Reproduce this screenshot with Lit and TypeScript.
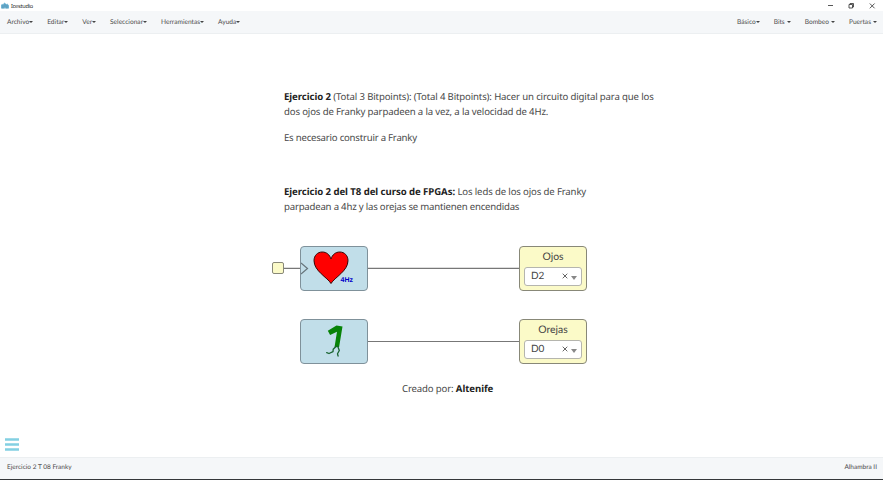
import { LitElement, html, css, svg } from "lit";
import { customElement, property } from "lit/decorators.js";

@customElement("menu-item")
class MenuItem extends LitElement {
  @property() label = "";
  @property({ type: Boolean }) spaced = false;
  static styles = css`
    :host { display: flex; align-items: center; font: 6.6px/10px Lato, sans-serif; color: #4c4c4c; white-space: nowrap; text-rendering: geometricPrecision; }
    .caret { border: 2px solid transparent; border-top-color: #444; border-bottom: 0; }
    .gap { margin-left: 2px; }
  `;
  render() {
    return html`<span>${this.label}</span><i class="caret ${this.spaced ? "gap" : ""}"></i>`;
  }
}

@customElement("output-block")
class OutputBlock extends LitElement {
  @property() name = "";
  @property() pin = "";
  static styles = css`
    :host { display: flex; flex-direction: column; box-sizing: border-box; width: 68px; height: 45px; padding: 2px 4px 0; background: #fbfac8; border: 1px solid #888878; border-radius: 4px; font-family: Lato, sans-serif; color: #444; text-rendering: geometricPrecision; }
    .name { font-size: 10.4px; line-height: 16px; text-align: center; height: 18px; }
    .select { display: flex; align-items: center; box-sizing: border-box; height: 19px; border: 1px solid #b5b5ae; border-radius: 3px; background: #fff; padding: 0 4px 0 6px; }
    .pin { flex: 1; font-size: 10px; line-height: 16px; margin-top: -1px; }
    .x { width: 6px; height: 6px; margin-right: 3px; margin-top: -1px; }
    .caret { border: 3px solid transparent; border-top: 4px solid #888; border-bottom: 0; margin-top: 2px; }
  `;
  render() {
    return html`<div class="name">${this.name}</div>
      <div class="select"><span class="pin">${this.pin}</span>
        <svg class="x" viewBox="0 0 6 6"><path d="M.7 .7 5.300 5.300M5.300 .7 .7 5.300" stroke="#666" stroke-width="1"/></svg>
        <i class="caret"></i></div>`;
  }
}

const logo = svg`<path d="M0 3 1.5 1.5 2 2.5 4 0 6 2 7 1.3 9 3.5V7H0Z" fill="#72b5d4"/><path d="M2.2 3V7M4.5 2V5.5M6.7 3V7" stroke="#397aa0" stroke-width=".7"/>`;

const heart = svg`<path d="M18 32.5C14.5 26.5 1 20 1 9.7C1 4.500 4.600 1 9.200 1C13.500 1 16.700 3.700 18 8C19.300 3.700 22.500 1 26.800 1C31.400 1 35 4.500 35 9.700C35 20 21.500 26.500 18 32.500Z" fill="#f00" stroke="#350808" stroke-width="1"/>`;

const walkingOne = svg`<path d="M2.300 5.800 11 .6 17 1.500 13.600 22 9 22.300 11.500 6.800 4.600 10Z" fill="#078307"/><path d="M10.500 21.500 7.700 24.300 7.500 26.700 3.500 28.500 1.200 27.600M12.300 21.500 13.800 25.500 12 28.800 12.600 31" fill="none" stroke="#18632f" stroke-width="1.300" stroke-linejoin="round" stroke-linecap="round"/>`;

@customElement("app-root")
class AppRoot extends LitElement {
  static styles = css`
    :host { display: flex; flex-direction: column; width: 883px; height: 480px; background: #fff; overflow: hidden; font-family: Lato, sans-serif; color: #444; text-rendering: geometricPrecision; }
    .title { display: flex; align-items: center; height: 11px; padding-left: 1px; font: 5.6px/10px "Noto Sans", sans-serif; letter-spacing: -.25px; color: #222; }
    .logo { width: 8px; height: 7px; margin-right: 2px; }
    .window { margin-left: auto; width: 56px; height: 10px; }
    .menu { display: flex; box-sizing: border-box; height: 23px; padding: 6px 6px 0 7px; background: #f5f7f9; border-bottom: 1px solid #eceff1; align-items: flex-start; justify-content: space-between; }
    .group { display: flex; gap: 14px; }
    .canvas { position: relative; flex: 1; }
    .wires, .block, .note, .port, .burger { position: absolute; }
    .wires { left: 0; top: 0; width: 883px; height: 423px; }
    .note { left: 284px; font: 9.6px/15px "Noto Sans", sans-serif; letter-spacing: -.145px; white-space: nowrap; color: #484848; }
    .note b { color: #1e1e22; letter-spacing: -.06px; }
    .n1 { top: 55px; }
    .n2 { top: 96px; letter-spacing: -.22px; }
    .n3 { top: 150px; }
    .tight { letter-spacing: -.2px; }
    .n4 { left: 402px; top: 347px; }
    .code { box-sizing: border-box; left: 300px; width: 68px; height: 45px; background: #c1dee9; border: 1px solid #7f919a; border-radius: 4px; }
    .first { top: 212px; }
    .second { top: 285px; }
    .out { left: 519px; }
    .port { left: 272px; top: 228px; width: 12px; height: 12px; box-sizing: border-box; background: #fbfac8; border: 1px solid #888878; border-radius: 2px; }
    .art { display: block; width: 66px; height: 43px; }
    .hz { font: bold 7px "Liberation Sans", sans-serif; fill: #0000c8; }
    .burger { left: 5px; top: 404px; width: 14px; height: 13px; }
    .status { display: flex; justify-content: space-between; box-sizing: border-box; height: 22px; padding: 5px 6px 0 7px; background: #f5f7f9; border-top: 1px solid #eceff1; font-size: 6.5px; line-height: 10px; color: #4c4c4c; }
    .edge { height: 1px; background: #34373a; }
  `;
  render() {
    return html`
      <header class="title">
        <svg class="logo" viewBox="0 0 9 7">${logo}</svg><span>Icestudio</span>
        <svg class="window" viewBox="0 0 56 10" fill="none" stroke="#444" stroke-width=".9">
          <path d="M1 4.500H6M42.800 2.500 47.600 7.300M47.600 2.500 42.800 7.300M22 3.500h3.500v3.500h-3.500zM23 3.500v-1h3.500v3.500h-1"/>
        </svg>
      </header>
      <nav class="menu">
        <div class="group">${["Archivo", "Editar", "Ver", "Seleccionar", "Herramientas", "Ayuda"].map((l) => html`<menu-item label=${l}></menu-item>`)}</div>
        <div class="group">${["Básico", "Bits", "Bombeo", "Puertas"].map((l) => html`<menu-item label=${l} ?spaced=${l !== "Básico"}></menu-item>`)}</div>
      </nav>
      <main class="canvas">
        <svg class="wires" viewBox="0 0 883 423" stroke="#777" stroke-width="1.200"><path d="M284 234.300H302M367 234.300H520M367 307.500H520"/></svg>
        <div class="note n1"><b>Ejercicio 2</b> (Total 3 Bitpoints): (Total 4 Bitpoints): Hacer un circuito digital para que los<br>dos ojos de Franky parpadeen a la vez, a la velocidad de 4Hz.</div>
        <div class="note n2">Es necesario construir a Franky</div>
        <div class="note n3"><b>Ejercicio 2 del T8 del curso de FPGAs:</b> Los leds de los ojos de Franky<br><span class="tight">parpadean a 4hz y las orejas se mantienen encendidas</span></div>
        <div class="port"></div>
        <div class="block code first"><svg class="art" viewBox="0 0 66 43">
          <path d="M0 16 6.500 21.500 0 27" fill="none" stroke="#66747a" stroke-width="1.200"/><g transform="translate(12 4)">${heart}</g><text class="hz" x="39.500" y="35">4Hz</text></svg></div>
        <div class="block code second"><svg class="art" viewBox="0 0 66 43"><g transform="translate(24.500 5)">${walkingOne}</g></svg></div>
        <output-block class="block out first" name="Ojos" pin="D2"></output-block>
        <output-block class="block out second" name="Orejas" pin="D0"></output-block>
        <div class="note n4">Creado por: <b>Altenife</b></div>
        <svg class="burger" viewBox="0 0 14 13"><path d="M0 1.500H14M0 6.500H14M0 11.500H14" stroke="#83d0e2" stroke-width="2.600"/></svg>
      </main>
      <footer class="status"><span>Ejercicio 2 T 08 Franky</span><span>Alhambra II</span></footer>
      <div class="edge"></div>
    `;
  }
}
